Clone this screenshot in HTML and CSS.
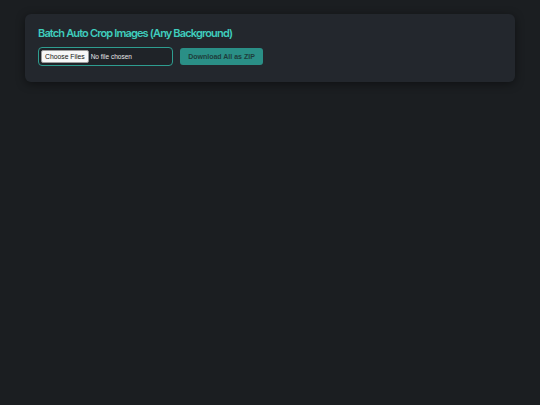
FILE: index.html
```html
<!DOCTYPE html>
<html lang="en">
<head>
<meta charset="utf-8">
<title>Batch Auto Crop Images</title>
<link rel="stylesheet" href="styles.css">
</head>
<body>
<div class="card">
  <h1 class="title">Batch Auto Crop Images (Any Background)</h1>
  <div class="row">
    <input class="file" type="file" multiple accept="image/*">
    <button class="btn" type="button">Download All as ZIP</button>
  </div>
</div>
</body>
</html>
```
FILE: styles.css
```css
html, body {
  margin: 0;
  padding: 0;
  background: #1b1e21;
  height: 100%;
}
body {
  padding-top: 14px;
  box-sizing: border-box;
}
.card {
  margin: 0 25px;
  padding: 11px 13px 16px;
  background: #23272d;
  border-radius: 6px;
  box-shadow: 0 2px 10px rgba(0, 0, 0, 0.45);
}
.title {
  margin: 0 0 6px;
  font-family: Inter, "Liberation Sans", sans-serif;
  font-weight: 600;
  font-size: 11px;
  line-height: 16px;
  color: #3fcdbd;
  letter-spacing: -0.85px;
}
.row {
  display: flex;
  align-items: center;
  gap: 7px;
}
.file {
  box-sizing: border-box;
  width: 135px;
  height: 19px;
  padding: 2px;
  border: 1px solid #2e9d90;
  border-radius: 4px;
  background: #1f2328;
  color: #e8e8e8;
  font-family: "Liberation Sans", Arial, sans-serif;
  font-size: 6.5px;
}
.file::file-selector-button {
  height: 13px;
  padding: 0 3px;
  margin-right: 2px;
  background: #f7f7f7;
  color: #111;
  border: 1px solid #9a9a9a;
  border-radius: 2px;
  font-family: "Liberation Sans", Arial, sans-serif;
  font-size: 6.8px;
}
.btn {
  width: 83px;
  height: 17px;
  padding: 0;
  border: none;
  border-radius: 3px;
  background: #2a8f86;
  color: #1e3d3b;
  font-family: "Liberation Sans", Arial, sans-serif;
  font-weight: bold;
  font-size: 7px;
}
```
